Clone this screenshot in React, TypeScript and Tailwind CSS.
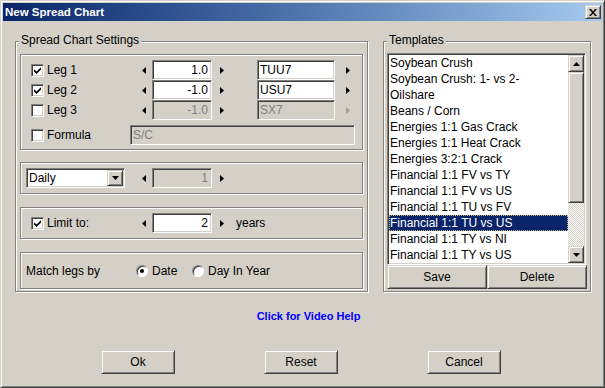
import React from "react";

const templates = [
  "Soybean Crush",
  "Soybean Crush: 1- vs 2-",
  "Oilshare",
  "Beans / Corn",
  "Energies 1:1 Gas Crack",
  "Energies 1:1 Heat Crack",
  "Energies 3:2:1 Crack",
  "Financial 1:1 FV vs TY",
  "Financial 1:1 FV vs US",
  "Financial 1:1 TU vs FV",
  "Financial 1:1 TU vs US",
  "Financial 1:1 TY vs NI",
  "Financial 1:1 TY vs US",
];

function ArrowLeft({ disabled }: { disabled?: boolean }) {
  return (
    <svg width="4" height="7" viewBox="0 0 4 7" className={disabled ? "fill-[#808080]" : "fill-black"}>
      <path d="M4 0V7L0 3.5Z" />
    </svg>
  );
}

function ArrowRight({ disabled }: { disabled?: boolean }) {
  return (
    <svg width="4" height="7" viewBox="0 0 4 7" className={disabled ? "fill-[#a0a0a0]" : "fill-black"}>
      <path d="M0 0V7L4 3.5Z" />
    </svg>
  );
}

function Checkbox({ checked }: { checked?: boolean }) {
  return (
    <div className="w-[13px] h-[13px] shrink-0 bg-white border border-t-[#808080] border-l-[#808080] border-b-white border-r-white shadow-[inset_1px_1px_0_#404040,inset_-1px_-1px_0_#d4d0c8] flex items-center justify-center">
      {checked && (
        <svg width="7" height="7" viewBox="0 0 7 7" className="fill-black">
          <path d="M0 2.2 2.5 4.6 7 0.2V2.6L2.5 7 0 4.6Z" />
        </svg>
      )}
    </div>
  );
}

function Radio({ checked }: { checked?: boolean }) {
  return (
    <div className="w-[12px] h-[12px] shrink-0 rounded-full bg-white border border-t-[#808080] border-l-[#808080] border-b-white border-r-white shadow-[inset_1px_1px_0_#404040] flex items-center justify-center">
      {checked && <div className="w-[4px] h-[4px] rounded-full bg-black" />}
    </div>
  );
}

function Field({
  value,
  width,
  disabled,
  right,
}: {
  value: string;
  width: string;
  disabled?: boolean;
  right?: boolean;
}) {
  return (
    <div
      className={`${width} h-[20px] shrink-0 flex items-center border border-t-[#808080] border-l-[#808080] border-b-white border-r-white shadow-[inset_1px_1px_0_#404040,inset_-1px_-1px_0_#d4d0c8] ${
        disabled ? "bg-[#d4d0c8] text-[#808080]" : "bg-white text-black"
      } ${right ? "justify-end pr-[3px]" : "pl-[2px]"}`}
    >
      {value}
    </div>
  );
}

function Raised({ className, children }: { className: string; children?: React.ReactNode }) {
  return (
    <div
      className={`border border-t-[#d4d0c8] border-l-[#d4d0c8] border-b-[#404040] border-r-[#404040] shadow-[inset_1px_1px_0_#fff,inset_-1px_-1px_0_#808080] bg-[#d4d0c8] flex items-center justify-center ${className}`}
    >
      {children}
    </div>
  );
}

function Etched({ className, children }: { className: string; children?: React.ReactNode }) {
  return (
    <div className={`border border-[#808080] shadow-[inset_1px_1px_0_#fff,1px_1px_0_#fff] ${className}`}>
      {children}
    </div>
  );
}

function SpinRow({
  label,
  checked,
  value,
  contract,
  disabled,
}: {
  label: string;
  checked?: boolean;
  value: string;
  contract: string;
  disabled?: boolean;
}) {
  return (
    <div className="h-[20px] flex items-center pl-[10px]">
      <Checkbox checked={checked} />
      <span className="ml-[3px] w-[95px]">{label}</span>
      <div className="w-[10px] flex">
        <ArrowLeft />
      </div>
      <Field value={value} width="w-[60px]" right disabled={disabled} />
      <div className="w-[45px] flex pl-[8px]">
        <ArrowRight />
      </div>
      <Field value={contract} width="w-[78px]" disabled={disabled} />
      <div className="ml-[11px] flex">
        <ArrowRight disabled={disabled} />
      </div>
    </div>
  );
}

export default function App() {
  return (
    <div className="w-[605px] h-[388px] overflow-hidden bg-[#d4d0c8] border border-t-[#d4d0c8] border-l-[#d4d0c8] border-b-[#404040] border-r-[#404040] shadow-[inset_1px_1px_0_#fff,inset_-1px_-1px_0_#808080] p-[2px] flex flex-col text-[12px] leading-[14px] text-black font-['Liberation_Sans',Arial,sans-serif]">
      {/* Title bar */}
      <div className="h-[18px] shrink-0 bg-gradient-to-r from-[#0a246a] to-[#a6caf0] flex items-center justify-between pl-[2px] pr-[1px]">
        <span className="text-white font-bold text-[11.5px]">New Spread Chart</span>
        <Raised className="w-[16px] h-[14px]">
          <svg width="8" height="7" viewBox="0 0 8 7" className="fill-black">
            <path d="M0 0h2l2 2.4L6 0h2L5 3.5 8 7H6L4 4.6 2 7H0l3-3.5z" />
          </svg>
        </Raised>
      </div>

      {/* Body */}
      <div className="pl-[12px] pt-[20px] flex">
        {/* Spread Chart Settings */}
        <div className="relative w-[353px] h-[251px] border border-[#808080] shadow-[inset_1px_1px_0_#fff,1px_1px_0_#fff] px-[4px] pt-[12px] flex flex-col">
          <span className="absolute left-[3px] -top-[9px] px-[2px] bg-[#d4d0c8]">Spread Chart Settings</span>

          <Etched className="h-[96px] pt-[5px] flex flex-col">
            <SpinRow label="Leg 1" checked value="1.0" contract="TUU7" />
            <SpinRow label="Leg 2" checked value="-1.0" contract="USU7" />
            <SpinRow label="Leg 3" value="-1.0" contract="SX7" disabled />
            <div className="h-[20px] mt-[5px] flex items-center pl-[10px]">
              <Checkbox />
              <span className="ml-[3px] w-[83px]">Formula</span>
              <Field value="S/C" width="w-[225px]" disabled />
            </div>
          </Etched>

          <Etched className="h-[32px] mt-[12px] flex items-center pl-[5px]">
            <div className="w-[99px] h-[20px] bg-white flex items-center border border-t-[#808080] border-l-[#808080] border-b-white border-r-white shadow-[inset_1px_1px_0_#404040,inset_-1px_-1px_0_#d4d0c8] p-[1px]">
              <span className="flex-1 pl-[1px]">Daily</span>
              <Raised className="w-[16px] h-[16px]">
                <svg width="7" height="4" viewBox="0 0 7 4" className="fill-black">
                  <path d="M0 0H7L3.5 4Z" />
                </svg>
              </Raised>
            </div>
            <div className="w-[10px] flex ml-[17px]">
              <ArrowLeft />
            </div>
            <Field value="1" width="w-[60px]" right disabled />
            <div className="flex pl-[8px]">
              <ArrowRight />
            </div>
          </Etched>

          <Etched className="h-[32px] mt-[13px] flex items-center pl-[10px]">
            <Checkbox checked />
            <span className="ml-[3px] w-[95px]">Limit to:</span>
            <div className="w-[10px] flex">
              <ArrowLeft />
            </div>
            <Field value="2" width="w-[60px]" right />
            <div className="flex pl-[8px]">
              <ArrowRight />
            </div>
            <span className="ml-[12px]">years</span>
          </Etched>

          <Etched className="h-[37px] mt-[13px] flex items-center pl-[5px]">
            <span className="w-[110px]">Match legs by</span>
            <Radio checked />
            <span className="ml-[4px] w-[40px]">Date</span>
            <Radio />
            <span className="ml-[4px]">Day In Year</span>
          </Etched>
        </div>

        {/* Templates */}
        <div className="relative ml-[15px] w-[208px] h-[251px] border border-[#808080] shadow-[inset_1px_1px_0_#fff,1px_1px_0_#fff] pl-[3px] pt-[11px] flex flex-col">
          <span className="absolute left-[3px] -top-[9px] px-[2px] bg-[#d4d0c8]">Templates</span>
          <div className="w-[199px] h-[212px] bg-white border border-t-[#808080] border-l-[#808080] border-b-white border-r-white shadow-[inset_1px_1px_0_#404040,inset_-1px_-1px_0_#d4d0c8] p-[1px] flex">
            <div className="flex-1 overflow-hidden">
              {templates.map((t) => (
                <div
                  key={t}
                  className={`h-[16px] leading-[14px] whitespace-nowrap border ${
                    t === "Financial 1:1 TU vs US"
                      ? "bg-[#0a246a] text-white border-dotted border-[#c8b878]"
                      : "border-transparent"
                  }`}
                >
                  {t}
                </div>
              ))}
            </div>
            <div className="w-[16px] flex flex-col">
              <Raised className="h-[17px] shrink-0">
                <svg width="7" height="4" viewBox="0 0 7 4" className="fill-black">
                  <path d="M0 4H7L3.5 0Z" />
                </svg>
              </Raised>
              <Raised className="h-[131px] shrink-0" />
              <div className="flex-1 bg-[repeating-conic-gradient(#d4d0c8_0_25%,#ffffff_0_50%)] bg-[length:2px_2px]" />
              <Raised className="h-[17px] shrink-0">
                <svg width="7" height="4" viewBox="0 0 7 4" className="fill-black">
                  <path d="M0 0H7L3.5 4Z" />
                </svg>
              </Raised>
            </div>
          </div>
          <div className="flex">
            <Raised className="w-[100px] h-[24px]">Save</Raised>
            <Raised className="w-[100px] h-[24px]">Delete</Raised>
          </div>
        </div>
      </div>

      {/* Help link */}
      <div className="mt-[17px] flex justify-center pl-[12px]">
        <span className="text-[#0000ff] font-bold text-[11px] cursor-pointer">Click for Video Help</span>
      </div>

      {/* Buttons */}
      <div className="mt-[27px] pl-[98px] flex gap-[89px]">
        <Raised className="w-[74px] h-[24px]">Ok</Raised>
        <Raised className="w-[74px] h-[24px]">Reset</Raised>
        <Raised className="w-[74px] h-[24px]">Cancel</Raised>
      </div>
    </div>
  );
}
